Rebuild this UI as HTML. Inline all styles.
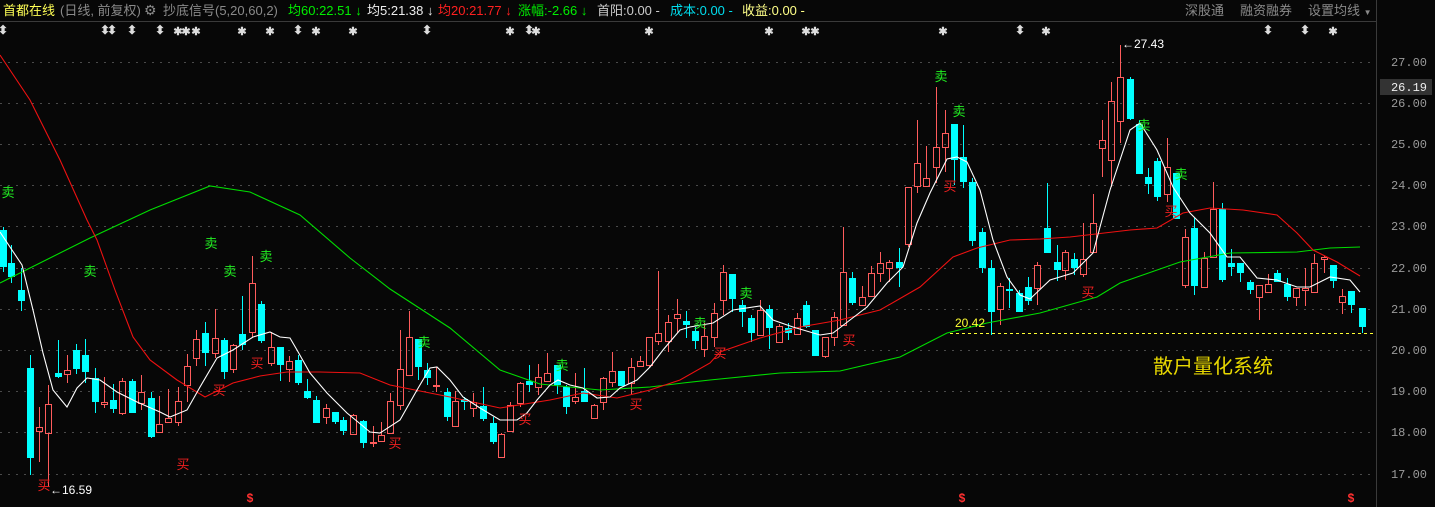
<!DOCTYPE html>
<html><head><meta charset="utf-8"><style>
html,body{margin:0;padding:0;background:#070707;}
#w{position:relative;width:1435px;height:507px;overflow:hidden;background:#070707;font-family:"Liberation Sans","Noto Sans CJK SC",sans-serif;}
.t{position:absolute;white-space:nowrap;font-size:13px;line-height:14px;}
svg{position:absolute;left:0;top:0;}
</style></head><body><div id="w">
<svg id="s" width="1435" height="507"></svg>
<div class="t" style="left:3px;top:4px;color:#ffff55">首都在线</div>
<div class="t" style="left:60px;top:4px;color:#8a8a8a">(日线, 前复权)</div>
<div class="t" style="left:144px;top:3px;color:#8a8a8a;font-size:14px">⚙</div>
<div class="t" style="left:163px;top:4px;color:#8a8a8a">抄底信号(5,20,60,2)</div>
<div class="t" style="left:288px;top:4px;color:#00ee00">均60:22.51 ↓</div>
<div class="t" style="left:367px;top:4px;color:#eeeeee">均5:21.38 ↓</div>
<div class="t" style="left:438px;top:4px;color:#ff2020">均20:21.77 ↓</div>
<div class="t" style="left:518px;top:4px;color:#00ee00">涨幅:-2.66 ↓</div>
<div class="t" style="left:597px;top:4px;color:#cccccc">首阳:0.00 -</div>
<div class="t" style="left:670px;top:4px;color:#00ddee">成本:0.00 -</div>
<div class="t" style="left:742px;top:4px;color:#ffff88">收益:0.00 -</div>
<div class="t" style="left:1185px;top:4px;color:#8a8a8a">深股通</div>
<div class="t" style="left:1240px;top:4px;color:#8a8a8a">融资融券</div>
<div class="t" style="left:1308px;top:4px;color:#8a8a8a">设置均线 <span style="font-size:8px">▼</span></div>
<div class="t" style="left:1153px;top:355px;color:#e8d800;font-size:20px;line-height:24px">散户量化系统</div>
<div class="t" style="left:955px;top:316px;color:#ffff33;font-size:12px">20.42</div>
<div class="t" style="left:1122px;top:37px;color:#fff;font-size:12px">&larr;27.43</div>
<div class="t" style="left:50px;top:483px;color:#fff;font-size:12px">&larr;16.59</div>
</div>
<script>
var s=document.getElementById('s'),h='';
function L(a,b,c,d,col,ex){h+='<line x1="'+a+'" y1="'+b+'" x2="'+c+'" y2="'+d+'" stroke="'+col+'" '+(ex||'')+'/>';}
L(0,21.5,1376,21.5,'#3a3a3a');
L(1376.5,0,1376.5,507,'#3a3a3a');
var lv=[[27,62],[26,103],[25,144],[24,185],[23,226],[22,268],[21,309],[20,350],[19,391],[18,432],[17,474]];
lv.forEach(function(v){L(0,v[1]+.5,1376,v[1]+.5,'#4a4a4a','stroke-dasharray="2,6"');
h+='<text x="1427" y="'+(v[1]+4)+'" fill="#9a9a9a" font-size="12" text-anchor="end" font-family="Liberation Mono,monospace">'+v[0].toFixed(2)+'</text>';});
h+='<rect x="1380" y="79" width="52" height="16" fill="#333"/><text x="1427" y="91" fill="#eee" font-size="12" text-anchor="end" font-family="Liberation Mono,monospace">26.19</text>';
L(950,333.5,1376,333.5,'#ffff33','stroke-dasharray="3,3"');
var C=[[3,'c',230,267,227,272],[11,'c',263,277,245,283],[21,'c',290,301,268,311],[30,'c',368,458,355,475],[39,'r',427,431,407,462],[48,'r',404,433,385,487],[58,'c',373,377,340,378],[67,'r',370,374,355,383],[76,'c',350,369,344,374],[85,'c',355,372,339,383],[95,'c',378,402,368,413],[104,'r',402,404,377,408],[113,'c',400,409,384,413],[122,'r',381,413,378,415],[132,'c',381,413,379,413],[141,'r',392,403,375,410],[151,'c',398,437,392,438],[159,'r',424,432,396,432],[168,'r',418,422,389,422],[178,'r',401,422,387,426],[187,'r',366,385,354,402],[196,'r',339,358,330,366],[205,'c',333,353,322,366],[215,'r',338,353,309,358],[224,'c',340,372,338,379],[233,'r',345,369,344,373],[242,'c',334,345,296,350],[252,'r',283,332,256,337],[261,'c',304,341,301,343],[271,'r',347,363,332,366],[280,'c',347,365,347,381],[289,'r',361,369,356,382],[298,'c',360,383,355,385],[307,'c',391,398,379,399],[316,'c',400,423,396,423],[326,'r',408,417,404,424],[335,'c',412,422,412,424],[343,'c',420,431,417,435],[353,'r',415,434,414,434],[363,'c',421,443,420,448],[373,'r',442,443,426,447],[381,'r',435,441,422,441],[390,'r',401,433,393,433],[400,'r',369,405,330,410],[409,'r',337,375,311,375],[418,'c',339,367,339,380],[427,'c',370,378,363,385],[436,'r',385,386,367,392],[447,'c',392,417,388,421],[455,'r',401,426,391,426],[464,'c',399,402,397,410],[473,'r',402,408,393,417],[483,'c',406,419,387,421],[493,'c',423,442,417,444],[501,'r',434,457,433,457],[510,'r',405,431,402,431],[520,'r',383,403,382,407],[529,'c',381,385,365,392],[538,'r',377,387,364,395],[547,'r',373,381,353,381],[557,'c',365,385,365,394],[566,'c',387,407,385,414],[575,'r',397,401,373,404],[584,'c',391,402,368,402],[594,'r',405,418,404,419],[603,'r',378,402,377,410],[612,'r',371,382,352,387],[621,'c',371,386,371,386],[631,'r',367,383,358,395],[640,'r',361,366,356,367],[649,'r',337,365,337,367],[658,'r',333,341,271,345],[668,'r',322,341,315,352],[677,'r',314,318,299,333],[686,'c',321,325,311,338],[695,'c',331,341,327,349],[704,'r',336,349,323,357],[714,'r',313,337,303,347],[723,'r',272,300,265,315],[732,'c',274,299,274,312],[742,'c',305,312,300,327],[751,'c',318,333,315,342],[760,'r',310,335,300,335],[769,'c',309,328,305,349],[779,'r',326,342,324,342],[788,'c',328,333,323,340],[797,'r',318,334,313,334],[806,'c',305,327,301,328],[815,'c',330,356,330,356],[825,'r',337,356,337,358],[834,'r',317,337,312,346],[843,'r',272,325,227,325],[852,'c',278,303,272,305],[862,'r',297,305,286,305],[871,'r',273,296,266,296],[880,'r',263,273,252,282],[889,'r',262,268,260,282],[899,'c',262,268,248,287],[908,'r',187,244,187,247],[917,'r',163,186,120,193],[926,'r',178,186,146,186],[936,'r',147,167,87,183],[945,'r',133,147,110,172],[954,'c',124,160,124,185],[963,'c',157,182,125,188],[972,'c',182,241,178,246],[982,'c',232,268,228,273],[991,'c',268,312,260,335],[1000,'r',286,309,283,325],[1009,'c',289,291,278,308],[1019,'c',293,312,290,312],[1028,'c',287,301,277,305],[1037,'r',265,288,262,305],[1047,'c',228,253,183,253],[1057,'c',262,270,245,281],[1065,'r',252,270,250,280],[1074,'c',259,268,253,275],[1083,'r',259,274,223,277],[1093,'r',223,252,194,252],[1102,'r',140,148,120,177],[1111,'r',101,160,82,187],[1120,'r',77,121,45,143],[1130,'c',79,119,77,120],[1139,'c',124,174,120,174],[1148,'c',177,184,168,194],[1157,'c',161,197,158,201],[1167,'r',167,194,138,202],[1176,'c',173,219,173,219],[1185,'r',237,285,229,288],[1194,'c',228,286,218,295],[1204,'r',258,287,252,288],[1213,'r',209,257,182,257],[1222,'c',209,280,203,282],[1231,'c',263,267,249,276],[1240,'c',263,273,263,282],[1250,'c',282,290,280,294],[1259,'r',285,297,285,320],[1268,'r',284,292,274,292],[1277,'c',273,282,270,282],[1287,'c',284,297,278,301],[1296,'r',288,297,288,306],[1305,'r',288,290,268,306],[1314,'r',263,292,254,293],[1324,'r',257,259,256,273],[1333,'c',265,281,265,288],[1342,'r',296,302,289,314],[1351,'c',291,305,291,313],[1362,'c',308,327,308,333]];
C.forEach(function(c){var x=c[0],col=c[1]=='c'?'#00ffff':'#ff5c5c';
if(c[1]=='c'){L(x+.5,c[4],x+.5,c[5],col);h+='<rect x="'+(x-3)+'" y="'+c[2]+'" width="7" height="'+Math.max(1,c[3]-c[2])+'" fill="'+col+'"/>';}
else{L(x+.5,c[4],x+.5,c[2],col);L(x+.5,c[3],x+.5,c[5],col);h+='<rect x="'+(x-2.5)+'" y="'+(c[2]+.5)+'" width="6" height="'+Math.max(1,c[3]-c[2])+'" fill="none" stroke="'+col+'"/>';}});
function P(pts,col){h+='<polyline fill="none" stroke="'+col+'" stroke-width="1.1" points="'+pts+'"/>';}
P('0,283 30,268 90,238 150,210 210,186 250,192 300,215 350,258 390,289 450,328 500,370 540,384 600,390 650,387 683,383 710,380 780,373 840,371 900,357 947,333 987,323 1040,313 1097,297 1120,283 1180,262 1230,253 1297,252 1330,248 1360,247','#00dd00');
P('0,55 30,100 60,160 87,220 97,240 115,290 133,337 150,360 177,380 205,397 233,383 260,376 287,372 320,372 360,373 390,385 450,397 500,408 550,400 583,393 617,398 650,390 680,380 710,363 720,352 760,338 800,327 840,320 880,310 920,287 953,257 977,248 1010,240 1040,239 1070,237 1130,230 1157,228 1183,213 1210,208 1243,210 1277,215 1297,233 1313,250 1337,262 1360,276','#ee1111');
P('0,232 22,265 33,310 43,353 53,390 67,407 77,388 87,378 100,380 117,392 137,402 160,412 170,417 187,410 200,387 217,358 233,350 253,337 270,332 280,337 290,338 297,350 310,373 327,393 347,413 358,422 370,432 380,433 400,420 417,390 430,368 437,367 450,380 463,397 480,408 500,420 517,420 527,413 537,400 550,385 558,380 570,385 583,388 597,398 610,397 620,388 637,380 650,367 663,350 680,330 690,327 713,323 733,310 760,306 773,320 793,327 820,335 833,333 850,320 867,307 887,283 903,267 917,223 930,193 947,159 957,157 967,162 980,190 993,240 1007,277 1020,295 1030,299 1050,280 1073,273 1093,253 1110,190 1130,130 1140,123 1157,150 1173,187 1190,213 1210,233 1227,257 1240,257 1257,278 1277,280 1297,287 1310,287 1330,277 1350,280 1360,292','#ffffff');
function T(x,y,t,col,fs,fw){h+='<text x="'+x+'" y="'+y+'" fill="'+col+'" font-size="'+(fs||13)+'" '+(fw?'font-weight="bold" ':'')+'text-anchor="middle" font-family="Liberation Sans,Noto Sans CJK SC,sans-serif">'+t+'</text>';}
[[8,197],[90,276],[211,248],[230,276],[266,261],[424,347],[562,370],[700,328],[746,298],[941,81],[959,116],[1144,130],[1181,179]].forEach(function(p){T(p[0],p[1],'卖','#22ee22');});
[[44,490],[183,469],[219,395],[257,368],[395,448],[525,424],[636,409],[720,358],[849,345],[950,191],[1088,297],[1171,216]].forEach(function(p){T(p[0],p[1],'买','#ee2020');});
[3,105,112,132,160,298,427,529,1020,1268,1305].forEach(function(x){T(x,34,'⬍','#dddddd',12,1);});
[178,186,196,242,270,316,353,510,536,649,769,806,815,943,1046,1333].forEach(function(x){T(x,35,'✱','#dddddd',11,1);});
[250,962,1351].forEach(function(x){T(x,502,'$','#ff3030',12,1);});
s.innerHTML=h;
</script>
</body></html>
